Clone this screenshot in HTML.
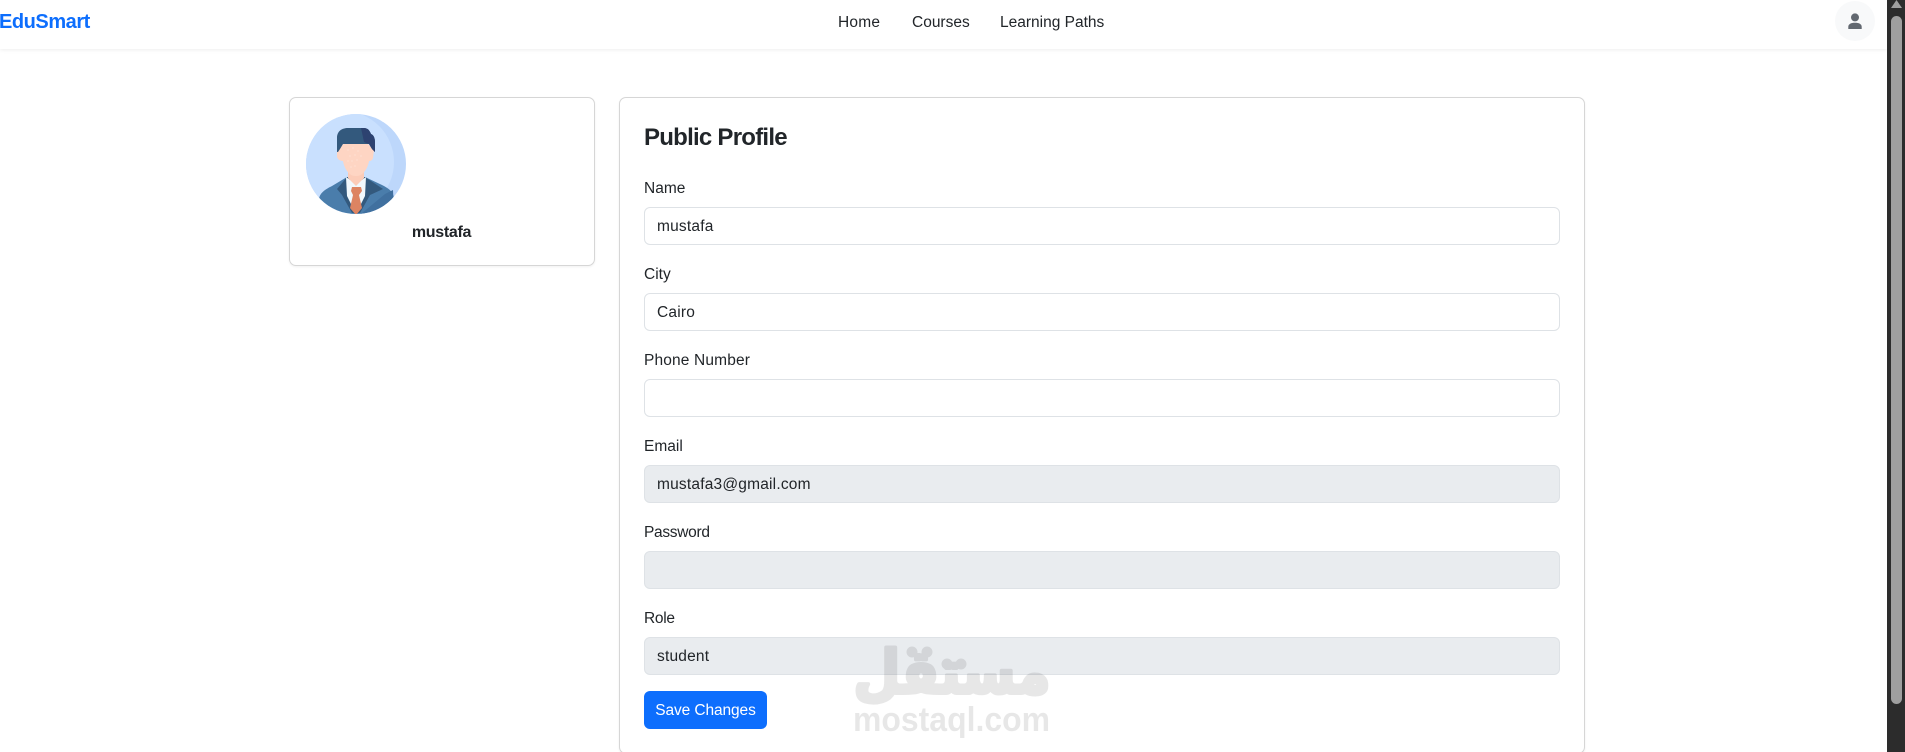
<!DOCTYPE html>
<html lang="en"><head><meta charset="utf-8"><title>EduSmart - Profile</title>
<style>
html,body{margin:0;padding:0;width:1905px;height:752px;overflow:hidden;background:#fff}
body{position:relative;font-family:"Liberation Sans",sans-serif;font-size:15.5px;color:#212529}
.a{position:absolute;white-space:nowrap;line-height:24px}
nav{position:absolute;left:0;top:0;width:1887px;height:49px;background:#fff;box-shadow:0 1px 4px rgba(0,0,0,.07)}
.card{position:absolute;box-sizing:border-box;background:#fff;border:1px solid #d6d6d6;border-radius:7px;box-shadow:0 1px 2px rgba(0,0,0,.06)}
.inp{position:absolute;left:644px;width:916px;height:38px;box-sizing:border-box;border:1px solid #dee2e6;border-radius:6px;background:#fff;padding:7px 12px 5px;line-height:24px;letter-spacing:.2px}
.dis{background:#e9ecef}
.lab{left:644px}
.btn{position:absolute;left:644px;top:691px;width:123px;height:38px;background:#0d6efd;border-radius:6px;color:#fff;text-align:center;line-height:40px;letter-spacing:-.1px}
.sb{position:absolute;left:1887px;top:0;width:18px;height:752px;background:#2c2c2c}
.th{position:absolute;left:4px;top:16px;width:11px;height:688px;background:#9f9f9f;border-radius:6px}
svg{position:absolute;display:block}
</style></head><body>
<nav>
<div class="a" style="left:-1px;top:10px;font-size:20px;font-weight:700;color:#0d6efd;letter-spacing:-.45px">EduSmart</div>
<div class="a" style="left:838px;top:11px;letter-spacing:.2px">Home</div>
<div class="a" style="left:912px;top:11px">Courses</div>
<div class="a" style="left:1000px;top:11px">Learning Paths</div>
<div style="position:absolute;left:1835px;top:1px;width:40px;height:40px;border-radius:50%;background:#f8f9fa"></div>
<svg style="left:1846px;top:12px" width="18" height="18" viewBox="0 0 18 18"><circle cx="9" cy="5.4" r="4" fill="#626870"/><path d="M2.3 17V14.8C2.3 12 5 10.7 9 10.7S15.700 12 15.700 14.800V17Z" fill="#626870"/></svg>
</nav>

<div class="card" style="left:289px;top:97px;width:306px;height:169px"></div>
<svg style="left:306px;top:114px" width="100" height="100" viewBox="0 0 100 100">
<defs><clipPath id="c"><circle cx="50" cy="50" r="50"/></clipPath></defs>
<g clip-path="url(#c)">
<rect width="100" height="100" fill="#bdd7fb"/>
<circle cx="37" cy="48" r="51" fill="#c9e0fe"/>
<path d="M13 86C13 79 20 75 26 72L41 63H59L76 71C82 74 87 77 88 84V101H13Z" fill="#4a7dab"/>
<path d="M41 63L31 75L36 81L46 99H54L64 81L77 75L59 63Z" fill="#33597d"/>
<path d="M40 63L50 70L60 63L59 82L50 100L41 82Z" fill="#f1f8fc"/>
<path d="M42 52H58V64L50 72L42 64Z" fill="#fcccb8"/>
<path d="M37 30H62L66 34L68 36L67 44C66 47 64 47 63 47C62 54 57 62 51 62H49C43 62 38 54 37 47C35 47 32 46 31 43L31 34Z" fill="#fed5c3"/>
<path d="M31 38V24C31 17 36 14 42 14H57C61 14 63 15 65 20C68 21 69 25 69 28V38L66 35L63 30H37L34 35L32 38Z" fill="#33597d"/>
<path d="M55 14H57C61 14 63 15 65 20C68 21 69 25 69 28V38L66 35L63 30L58 28Z" fill="#2d4270"/>
<path d="M46 73H55L56 77L53 81L56 94L50 101L44 94L47 81L45 77Z" fill="#dd8462"/>
<path d="M55 100L79 80L87 76L88 100Z" fill="#40709f"/>
<g fill="#fff" opacity=".65"><circle cx="42" cy="36" r=".5"/><circle cx="47" cy="34" r=".5"/><circle cx="52" cy="37" r=".5"/><circle cx="44" cy="42" r=".5"/><circle cx="49" cy="41" r=".5"/><circle cx="55" cy="42" r=".5"/><circle cx="46" cy="47" r=".5"/><circle cx="51" cy="46" r=".5"/><circle cx="42" cy="47" r=".5"/><circle cx="49" cy="52" r=".5"/><circle cx="45" cy="53" r=".5"/></g>
</g></svg>
<div class="a" style="left:289px;width:306px;text-align:center;top:221px;font-size:16px;font-weight:700;letter-spacing:-.3px;padding-right:1px;box-sizing:border-box">mustafa</div>

<div class="card" style="left:619px;top:97px;width:966px;height:657px"></div>
<div class="a" style="left:644px;top:123px;font-size:24px;font-weight:700;line-height:29px;letter-spacing:-.75px">Public Profile</div>

<div class="a lab" style="top:177px">Name</div>
<div class="inp" style="top:207px">mustafa</div>
<div class="a lab" style="top:263px">City</div>
<div class="inp" style="top:293px">Cairo</div>
<div class="a lab" style="top:349px;letter-spacing:.15px">Phone Number</div>
<div class="inp" style="top:379px"></div>
<div class="a lab" style="top:435px">Email</div>
<div class="inp dis" style="top:465px">mustafa3@gmail.com</div>
<div class="a lab" style="top:521px;letter-spacing:-.3px">Password</div>
<div class="inp dis" style="top:551px"></div>
<div class="a lab" style="top:607px;letter-spacing:-.3px">Role</div>
<div class="inp dis" style="top:637px">student</div>
<div class="btn">Save Changes</div>

<svg style="left:845px;top:640px;opacity:.09" width="215" height="104" viewBox="0 0 215 104">
<text x="107" y="53" text-anchor="middle" font-family="DejaVu Sans, sans-serif" font-weight="700" font-size="60" textLength="197" lengthAdjust="spacingAndGlyphs" fill="#000" stroke="#000" stroke-width="4" stroke-linejoin="round" direction="rtl">مستقل</text>
<g fill="#000"><circle cx="67" cy="12" r="5.500"/><circle cx="82" cy="12" r="5.500"/><circle cx="102" cy="24" r="5.500"/><circle cx="116" cy="24" r="5.500"/></g>
<text x="8" y="91" font-family="Liberation Sans, sans-serif" font-weight="700" font-size="34" textLength="197" lengthAdjust="spacingAndGlyphs" fill="#000">mostaql.com</text>
</svg>

<div class="sb"><svg style="left:4px;top:0" width="11" height="9"><path d="M5.500 0L11 8H0Z" fill="#a0a0a0"/></svg><div class="th"></div></div>
</body></html>
